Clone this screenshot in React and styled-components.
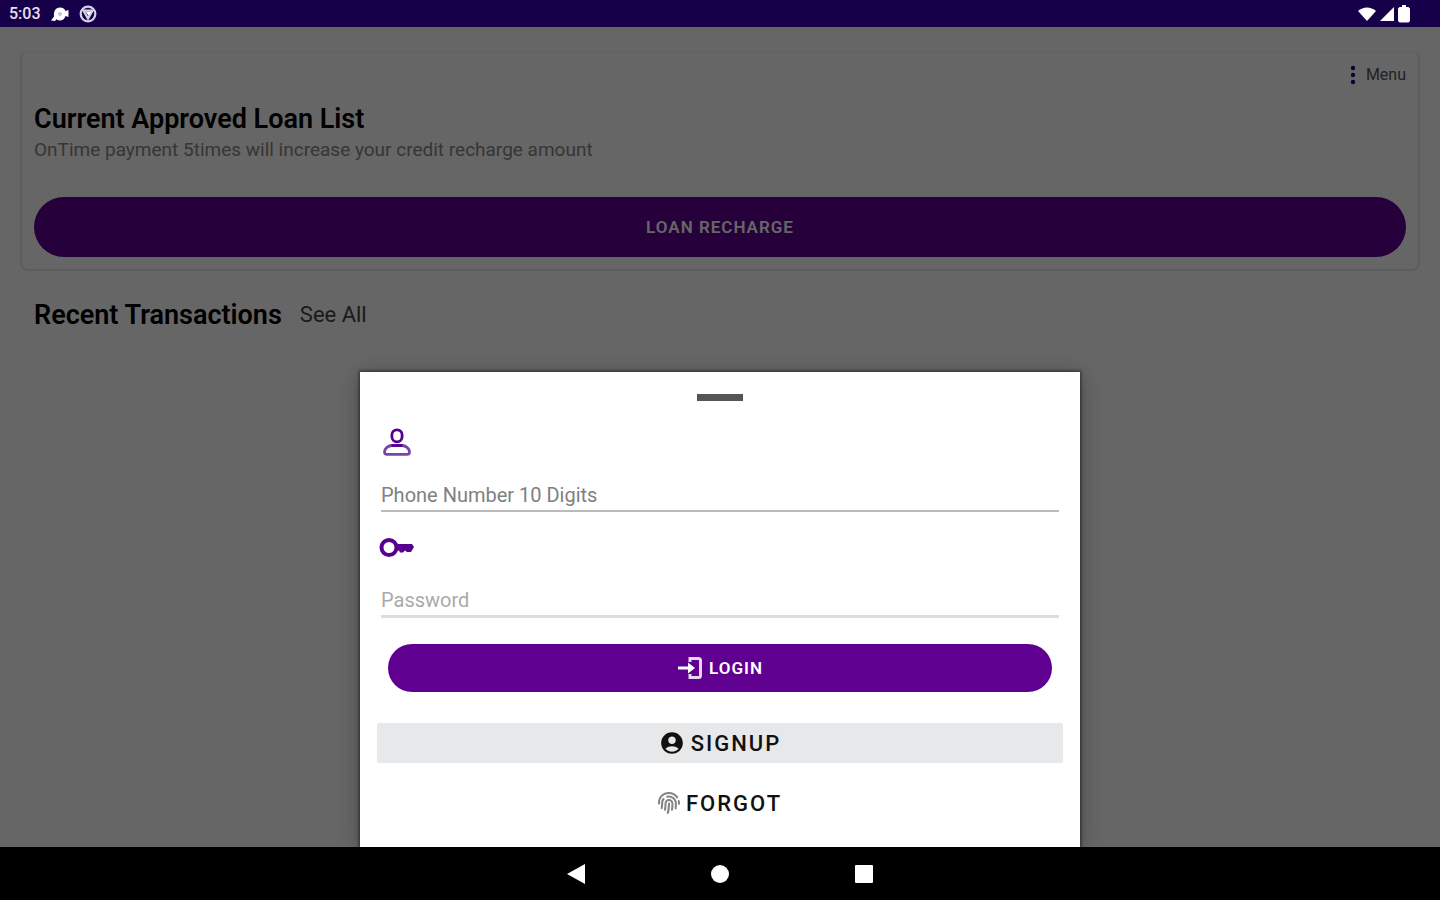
import React, { useState } from 'react';
import styled, { createGlobalStyle } from 'styled-components';
import { MdAccountCircle } from 'react-icons/md';
import { FaFingerprint } from 'react-icons/fa';

function StatusBar() {
	return (
		<StatusContainer>
			<StatusGroup>
				<Clock>5:03</Clock>
				<svg width='18' height='16' viewBox='0 0 18 16' fill='#fff' aria-hidden='true'>
					<path d='M0 14.500 3 10.500C2.500 5 4.500 1.500 9 1.500c3 0 4.800 1.500 5.500 3.500l3-1v7l-3-1c-1 3-3 4.500-5.500 4.500-1.500 0-2.700-.4-3.600-1.200L4 15z' />
					<circle cx='9' cy='8' r='2' fill='#c9c2dc' />
				</svg>
				<svg width='18' height='18' viewBox='0 0 16 16' fill='none' stroke='#d6d1e4' strokeWidth='2' aria-hidden='true'>
					<circle cx='8' cy='8' r='6.500' />
					<path d='M4 5h8L8 12z' fill='#17004a' />
					<path d='M6 6h5L8.500 9.500z' fill='#fff' stroke='none' />
				</svg>
			</StatusGroup>
			<SignalGroup>
				<svg width='18' height='14' viewBox='0 0 18 14' fill='#fff' aria-hidden='true'>
					<path d='M0 4C5-.8 13-.8 18 4L9 14z' />
				</svg>
				<svg width='14' height='14' viewBox='0 0 14 14' fill='#fff' aria-hidden='true'>
					<path d='M14 0v14H0z' />
				</svg>
				<svg width='12' height='18' viewBox='0 0 12 18' fill='#fff' aria-hidden='true'>
					<path d='M4 0h4v2h2.500L12 3.500V16l-1.500 1.500h-9L0 16V3.500L1.500 2H4z' />
				</svg>
			</SignalGroup>
		</StatusContainer>
	);
}

function LoanCard() {
	return (
		<Card>
			<MenuButton type='button'>
				<svg width='6' height='20' viewBox='0 0 6 20' fill='#260094' aria-hidden='true'>
					<circle cx='3' cy='3' r='2.200' />
					<circle cx='3' cy='10' r='2.200' />
					<circle cx='3' cy='17' r='2.200' />
				</svg>
				Menu
			</MenuButton>
			<Title>Current Approved Loan List</Title>
			<Description>
				OnTime payment 5times will increase your credit recharge amount
			</Description>
			<RechargeButton type='button'>LOAN RECHARGE</RechargeButton>
		</Card>
	);
}

function LoginSheet() {
	const [phone, setPhone] = useState('');
	const [password, setPassword] = useState('');

	return (
		<Sheet onSubmit={(e) => e.preventDefault()}>
			<Handle />
			<FieldLabel htmlFor='phone' aria-label='Phone Number'>
				<svg width='28' height='28' viewBox='0 0 28 28' fill='none' stroke='currentColor' strokeWidth='2.800' aria-hidden='true'>
					<rect x='8.900' y='1.800' width='10.200' height='12' rx='5' />
					<path d='M9 17.500h10c3.500 0 7.500 3 7.500 6.500 0 1.600-.8 2.400-2.400 2.400H3.900c-1.600 0-2.400-.8-2.400-2.400 0-3.500 4-6.500 7.500-6.500z' stroke='#7a45ab' />
					<path d='M8.500 17.500h11' />
				</svg>
			</FieldLabel>
			<Field
				id='phone'
				type='tel'
				placeholder='Phone Number 10 Digits'
				value={phone}
				onChange={(e) => setPhone(e.target.value)}
			/>
			<FieldLabel htmlFor='password' aria-label='Password' $key>
				<svg width='36' height='20' viewBox='0 0 36 20' aria-hidden='true'>
					<circle cx='10' cy='9.500' r='7.500' fill='none' stroke='currentColor' strokeWidth='4' />
					<path d='M18 6h15l2 3-3 5h-4l-2-1.500-2 2h-3l-1-2h-3z' fill='currentColor' />
				</svg>
			</FieldLabel>
			<Field
				id='password'
				type='password'
				placeholder='Password'
				value={password}
				onChange={(e) => setPassword(e.target.value)}
				$faint
			/>
			<LoginButton type='submit'>
				<svg width='26' height='24' viewBox='0 0 26 24' fill='none' stroke='currentColor' strokeWidth='3' aria-hidden='true'>
					<path d='M13 6V2.500h8.500a2 2 0 0 1 2 2v15a2 2 0 0 1-2 2H13V18' stroke='#e6d8f0' />
					<path d='M1 12h13' />
					<path d='M11 6.500 18 12 11 17.500z' fill='currentColor' stroke='none' />
				</svg>
				LOGIN
			</LoginButton>
			<TextButton type='button' $filled>
				<MdAccountCircle size={26} />
				SIGNUP
			</TextButton>
			<TextButton type='button'>
				<FaFingerprint size={22} color='#858585' />
				FORGOT
			</TextButton>
		</Sheet>
	);
}

function App() {
	return (
		<Screen>
			<GlobalStyle />
			<StatusBar />
			<Main>
				<Content>
					<LoanCard />
					<Transactions>
						<Title>Recent Transactions</Title>
						<SeeAll href='#transactions'>See All</SeeAll>
					</Transactions>
				</Content>
				<Scrim>
					<LoginSheet />
				</Scrim>
			</Main>
			<NavBar>
				<NavButton type='button' aria-label='Back'>
					<svg width='20' height='20' viewBox='0 0 20 20' fill='#fff'>
						<path d='M1 10 19 0v20z' />
					</svg>
				</NavButton>
				<NavButton type='button' aria-label='Home'>
					<svg width='20' height='20' viewBox='0 0 20 20' fill='#fff'>
						<circle cx='10' cy='10' r='9' />
					</svg>
				</NavButton>
				<NavButton type='button' aria-label='Recent apps'>
					<svg width='20' height='20' viewBox='0 0 20 20' fill='#fff'>
						<rect x='1' y='1' width='18' height='18' rx='1' />
					</svg>
				</NavButton>
			</NavBar>
		</Screen>
	);
}

export default App;

const GlobalStyle = createGlobalStyle`
	* {
		box-sizing: border-box;
	}

	body {
		margin: 0;
		font-family: Roboto, 'Liberation Sans', sans-serif;
		color: #000;
		background: #000;
	}

	button,
	input {
		font-family: inherit;
	}
`;

const Screen = styled.div`
	display: flex;
	flex-direction: column;
	min-height: 100vh;
`;

const StatusContainer = styled.header`
	display: flex;
	align-items: center;
	justify-content: space-between;
	height: 27px;
	padding: 0 30px 0 9px;
	background: #17004a;
`;

const StatusGroup = styled.div`
	display: flex;
	align-items: center;
	gap: 10px;
`;

const SignalGroup = styled.div`
	display: flex;
	align-items: center;
	gap: 4px;
`;

const Clock = styled.time`
	font-size: 16px;
	font-weight: 500;
	color: #e4e0ee;
`;

const Main = styled.main`
	position: relative;
	display: flex;
	flex-direction: column;
	flex: 1;
	background: #fff;
`;

const Content = styled.div`
	padding: 24px 20px;
`;

const Card = styled.section`
	display: flex;
	flex-direction: column;
	padding: 12px;
	border: 2px solid #e8e8e8;
	border-top-color: #f8f8f8;
	border-radius: 8px;
`;

const MenuButton = styled.button`
	display: flex;
	align-items: center;
	align-self: flex-end;
	gap: 10px;
	margin-bottom: 18px;
	padding: 0;
	border: 0;
	background: none;
	font-size: 16px;
	line-height: 20px;
	color: #555;
`;

const Title = styled.h2`
	margin: 0;
	font-size: 27px;
	font-weight: 600;
	line-height: 32px;
`;

const Description = styled.p`
	margin: 0;
	font-size: 19px;
	line-height: 30px;
	color: #888;
`;

const RechargeButton = styled.button`
	height: 60px;
	margin-top: 32px;
	border: 0;
	border-radius: 30px;
	background: #5f0091;
	font-size: 17px;
	font-weight: 600;
	letter-spacing: 1px;
	color: #fff;
`;

const Transactions = styled.section`
	display: flex;
	align-items: center;
	gap: 18px;
	padding: 28px 14px;
`;

const SeeAll = styled.a`
	font-size: 22px;
	line-height: 32px;
	color: #444;
	text-decoration: none;
`;

const Scrim = styled.div`
	position: absolute;
	inset: 0;
	display: flex;
	align-items: flex-end;
	justify-content: center;
	overflow: hidden;
	background: rgba(0, 0, 0, 0.6);
`;

const Sheet = styled.form`
	display: flex;
	flex-direction: column;
	width: 50%;
	padding: 22px 17px 24px;
	background: #fff;
	box-shadow: 0 0 3px 1px rgba(0, 0, 0, 0.5), 0 4px 20px rgba(0, 0, 0, 0.3);
`;

const Handle = styled.div`
	align-self: center;
	width: 46px;
	height: 7px;
	background: #555;
`;

const FieldLabel = styled.label`
	display: flex;
	align-items: center;
	height: ${({ $key }) => ($key ? '72px' : '42px')};
	margin-top: ${({ $key }) => ($key ? '0' : '20px')};
	padding: ${({ $key }) => ($key ? '0 2px' : '0 6px')};
	color: #560090;
`;

const Field = styled.input`
	height: ${({ $faint }) => ($faint ? '34px' : '49px')};
	margin: 0 4px;
	padding: ${({ $faint }) => ($faint ? '0' : '16px 0 0')};
	border: 0;
	border-bottom: ${({ $faint }) => ($faint ? '3px solid #ddd' : '2px solid #bbb')};
	outline: 0;
	background: none;
	font-size: 20px;

	&::placeholder {
		color: ${({ $faint }) => ($faint ? '#aaa' : '#808080')};
	}
`;

const LoginButton = styled.button`
	display: flex;
	align-items: center;
	justify-content: center;
	gap: 6px;
	height: 48px;
	margin: 26px 11px 0;
	border: 0;
	border-radius: 24px;
	background: #5f0091;
	font-size: 17px;
	font-weight: 600;
	letter-spacing: 1px;
	color: #fff;
`;

const TextButton = styled.button`
	display: flex;
	align-items: center;
	justify-content: center;
	gap: 6px;
	height: 40px;
	margin-top: ${({ $filled }) => ($filled ? '31px' : '20px')};
	border: 0;
	border-radius: 2px;
	background: ${({ $filled }) => ($filled ? '#e7e8ea' : 'none')};
	font-size: 22px;
	font-weight: 500;
	letter-spacing: 2px;
	color: #111;
`;

const NavBar = styled.nav`
	display: flex;
	align-items: center;
	justify-content: center;
	gap: 124px;
	height: 53px;
	background: #000;
`;

const NavButton = styled.button`
	display: flex;
	padding: 0;
	border: 0;
	background: none;
`;
